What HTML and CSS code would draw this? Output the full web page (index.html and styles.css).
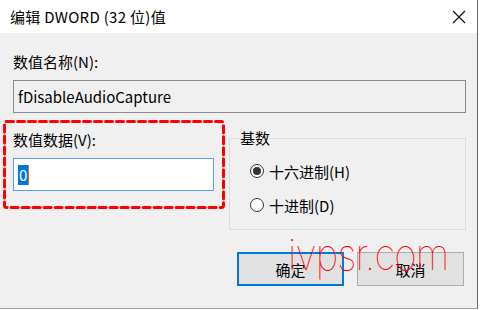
FILE: index.html
```html
<!DOCTYPE html>
<html lang="zh-CN">
<head>
  <meta charset="UTF-8">
  <title>编辑 DWORD (32 位)值</title>
  <link rel="stylesheet" href="styles.css">
</head>
<body>
<div class="window">
  <div class="titlebar">
    <span class="title">编辑 DWORD (32 位)值</span>
    <svg class="close" width="14" height="14" viewBox="0 0 14 14">
      <path d="M1 1 L13 13 M13 1 L1 13" stroke="#111" stroke-width="1.2" fill="none" />
    </svg>
  </div>

  <div class="body">
    <div class="label first">数值名称(N):</div>
    <div class="field readonly">fDisableAudioCapture</div>

    <div class="row">
      <div class="data-col">
        <div class="label">数值数据(V):</div>
        <div class="field focused"><span class="sel">0</span><span class="caret"></span></div>
        <svg class="mark" width="222" height="89" viewBox="0 0 222 89">
          <rect x="1.5" y="1.5" width="219" height="86" rx="2" fill="none" stroke="#f00" stroke-width="3" stroke-dasharray="7 4" stroke-linecap="round" />
        </svg>
      </div>

      <fieldset class="base">
        <legend>基数</legend>
        <div class="radio-row"><span class="radio checked"></span>十六进制(H)</div>
        <div class="radio-row"><span class="radio"></span>十进制(D)</div>
      </fieldset>
    </div>

    <div class="buttons">
      <div class="btn default">确定</div>
      <div class="btn">取消</div>
    </div>
  </div>

  <div class="watermark">ivpsr.com</div>
</div>
</body>
</html>
```

FILE: styles.css
```css
* { margin: 0; padding: 0; box-sizing: border-box; }
body {
  background: #fff;
  font-family: "Noto Sans CJK SC", "Noto Sans", sans-serif;
  font-size: 15px;
  color: #000;
}

/* Window frame */
.window {
  position: relative;
  width: 478px;
  height: 309px;
  background: #f0f0f0;
  border-right: 1px solid #666;
  border-bottom: 1px solid #a0a0a0;
}
.titlebar {
  height: 33px;
  background: #fff;
  display: flex;
  align-items: center;
  justify-content: space-between;
  padding: 0 11px 0 10px;
}
.title { font-size: 15px; line-height: 20px; letter-spacing: 0.3px; }
.close { display: block; }

/* Content */
.body { padding: 0 11px 0 13px; }
.label {
  font-size: 15px;
  line-height: 20px;
}
.label.first { padding-top: 19px; }
.field {
  height: 33px;
  margin-top: 8px;
  border: 1px solid #7a7a7a;
  display: flex;
  align-items: center;
  padding-left: 4px;
  font-size: 15px;
}
.field.readonly {
  background: #f0f0f0;
  border-color: #8a8a8a;
}
.field.focused {
  background: #fff;
  border-color: #5a9fe0;
}
.sel {
  background: #0078d7;
  color: #fff;
  line-height: 20px;
  padding: 0 1px;
}
.caret {
  width: 1px;
  height: 20px;
  background: #d07030;
}

.row {
  display: flex;
  margin-top: 16px;
}
.data-col {
  position: relative;
  width: 201px;
  padding-top: 1px;
}
.mark {
  position: absolute;
  left: -10px;
  top: -9px;
}

/* Group box */
.base {
  margin-left: 15px;
  width: 237px;
  height: 101px;
  border: 1px solid #dcdcdc;
  padding: 14px 0 0 20px;
}
.base legend {
  margin-left: -11px;
  padding: 0 1px;
  font-size: 15px;
  line-height: 18px;
}
.radio-row {
  display: flex;
  align-items: center;
  height: 20px;
  font-size: 15px;
  margin-bottom: 14px;
}
.radio {
  width: 14px;
  height: 14px;
  border: 1px solid #333;
  border-radius: 50%;
  background: #fff;
  margin-right: 5px;
  display: flex;
  align-items: center;
  justify-content: center;
}
.radio.checked::after {
  content: "";
  width: 8px;
  height: 8px;
  border-radius: 50%;
  background: #333;
}

/* Buttons */
.buttons {
  display: flex;
  justify-content: flex-end;
  gap: 13px;
  margin-top: 22px;
  padding-right: 2px;
}
.btn {
  width: 107px;
  height: 34px;
  background: #e1e1e1;
  border: 1px solid #adadad;
  display: flex;
  align-items: center;
  justify-content: center;
  font-size: 15px;
}
.btn.default {
  border: 2px solid #0078d7;
}

/* Watermark over the dialog */
.watermark {
  position: absolute;
  left: 288px;
  top: 229px;
  font-family: Inter, sans-serif;
  font-weight: 100;
  font-size: 44px;
  line-height: 50px;
  color: #ff0000;
  letter-spacing: -1px;
  transform: scaleX(0.88);
  transform-origin: left top;
}
```
